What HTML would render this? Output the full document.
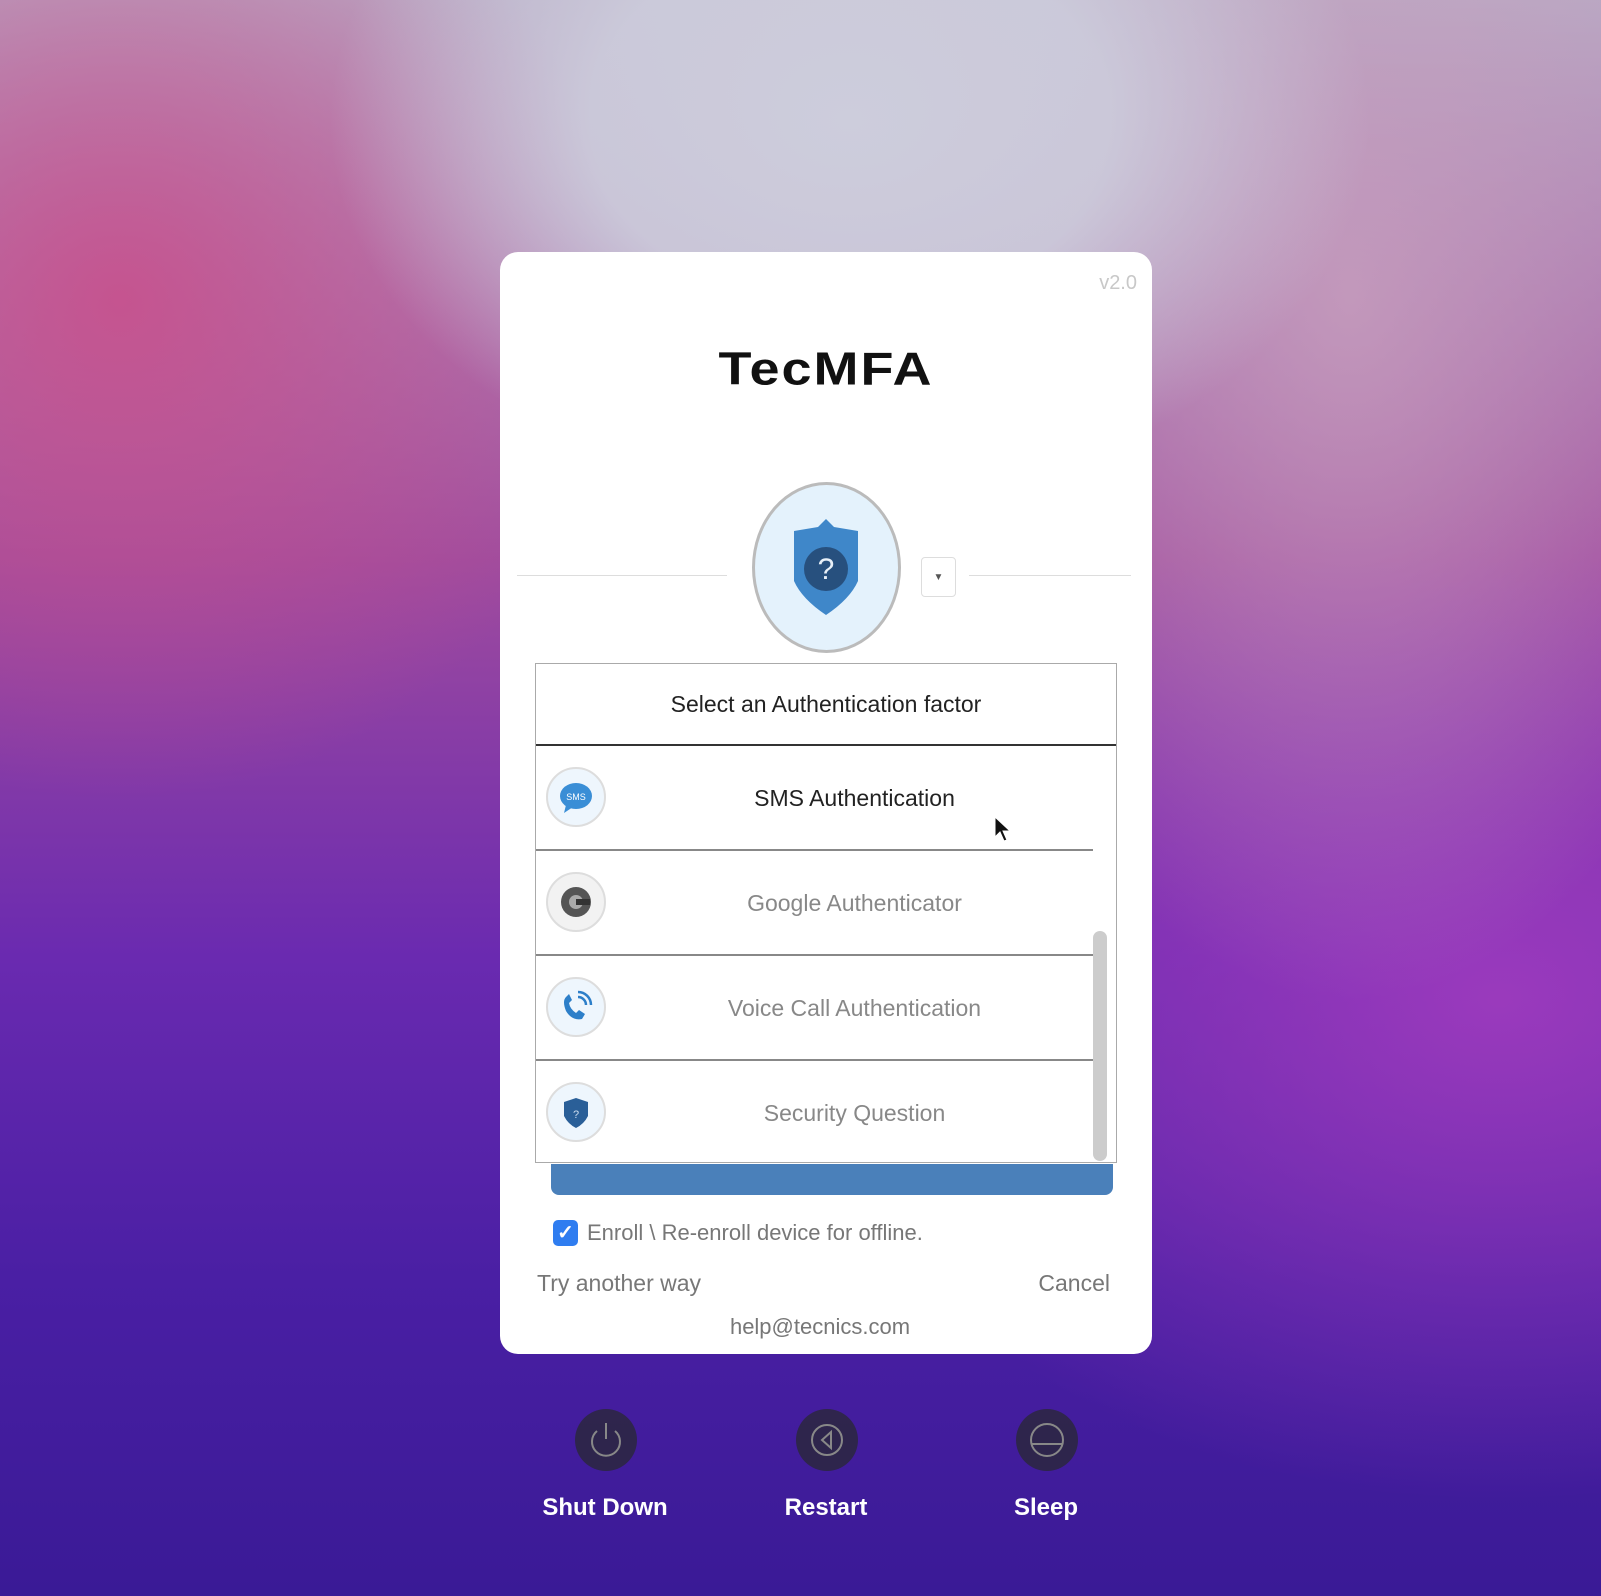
<!DOCTYPE html>
<html><head><meta charset="utf-8"><style>
*{margin:0;padding:0;box-sizing:border-box}
body{width:1601px;height:1596px;overflow:hidden;position:relative;font-family:"Liberation Sans",sans-serif;
background:
radial-gradient(ellipse 520px 380px at 850px 120px,rgba(205,205,220,1) 0%,rgba(205,205,220,0.9) 50%,rgba(205,205,220,0) 100%),
radial-gradient(ellipse 420px 700px at 1350px 300px,rgba(200,160,190,0.8),rgba(200,160,190,0) 100%),
radial-gradient(ellipse 500px 500px at 120px 300px,rgba(200,80,140,0.9),rgba(200,80,140,0) 100%),
radial-gradient(ellipse 700px 500px at 1500px 1000px,rgba(160,60,190,0.9),rgba(160,60,190,0) 100%),
linear-gradient(180deg,#b7a9c4 0%,#a04c9e 35%,#6a2ab0 60%,#4a1fa4 80%,#3a1a96 100%);}
.card{position:absolute;left:500px;top:252px;width:652px;height:1102px;background:#fff;border-radius:18px}
.abs{position:absolute}
.row{position:absolute;left:0;width:557px;height:105px;border-bottom:2px solid #888}
.row .ic{position:absolute;left:10px;top:21px;width:60px;height:60px;border-radius:50%;border:2px solid #ddd;background:#eef6fd}
.row .t{position:absolute;left:80px;right:0;top:0;line-height:105px;text-align:center;font-size:23px;color:#888}
.btn{position:absolute;width:62px;height:62px;border-radius:50%;background:rgba(40,40,50,0.75);top:1409px}
.lbl{position:absolute;top:1494px;color:#fff;font-weight:bold;font-size:24px;text-align:center;width:200px}
</style></head><body>
<div class="card">
 <div class="abs" style="right:15px;top:20px;color:#c8c8c8;font-size:20px">v2.0</div>
 <div class="abs" style="left:0;width:652px;top:86px;text-align:center;font-size:54px;font-weight:bold;color:#111;letter-spacing:2px;transform:scaleY(0.85)">TecMFA</div>
 <div class="abs" style="left:17px;top:323px;width:210px;height:1px;background:#ddd"></div>
 <div class="abs" style="left:469px;top:323px;width:162px;height:1px;background:#ddd"></div>
 <div class="abs" style="left:252px;top:230px;width:149px;height:171px;border-radius:50%;border:3px solid #bbb;background:#e4f2fc"></div>
 <svg class="abs" style="left:290px;top:265px" width="72" height="100" viewBox="0 0 72 100">
  <path d="M36 2 L44 10 L68 14 L68 64 Q60 82 36 98 Q12 82 4 64 L4 14 L28 10 Z" fill="#3f87c9"/>
  <circle cx="36" cy="52" r="22" fill="#27507e"/>
  <text x="36" y="62" text-anchor="middle" font-size="30" fill="#e8f0f8" font-family="Liberation Sans">?</text>
 </svg>
 <div class="abs" style="left:421px;top:305px;width:35px;height:40px;border:1px solid #ddd;border-radius:4px;text-align:center;line-height:40px;font-size:10px;color:#555">▼</div>
 <div class="abs" style="left:35px;top:411px;width:582px;height:500px;border:1px solid #aaa">
  <div class="abs" style="left:0;top:0;width:580px;height:82px;border-bottom:2px solid #333;text-align:center;line-height:80px;font-size:23px;color:#222">Select an Authentication factor</div>
  <div class="abs" style="left:557px;top:267px;width:14px;height:230px;border-radius:7px;background:#ccc"></div>
  <div class="row" style="top:82px"><div class="ic"><svg width="56" height="56"><ellipse cx="28" cy="27" rx="16" ry="13" fill="#3a8ed6"/><path d="M18 36 L16 44 L25 38Z" fill="#3a8ed6"/><text x="28" y="31" text-anchor="middle" font-size="9" fill="#fff" font-family="Liberation Sans">SMS</text></svg></div><div class="t" style="color:#222">SMS Authentication</div></div>
  <div class="row" style="top:187px"><div class="ic" style="background:#f2f2f2"><svg width="56" height="56"><circle cx="28" cy="28" r="15" fill="#555"/><circle cx="28" cy="28" r="7" fill="#aaa"/><rect x="28" y="25" width="14" height="6" fill="#333"/></svg></div><div class="t">Google Authenticator</div></div>
  <div class="row" style="top:292px"><div class="ic"><svg width="56" height="56"><path d="M18 18 Q14 22 18 32 Q24 42 34 40 L37 35 L31 31 L28 34 Q22 30 21 24 L24 21 L21 15Z" fill="#2d7fc9"/><path d="M30 18 A8 8 0 0 1 38 26 M30 13 A13 13 0 0 1 43 26" stroke="#2d7fc9" stroke-width="2.5" fill="none"/></svg></div><div class="t">Voice Call Authentication</div></div>
  <div class="row" style="top:397px;height:103px;border-bottom:none"><div class="ic"><svg width="56" height="56"><path d="M28 14 L40 18 L40 32 Q36 40 28 44 Q20 40 16 32 L16 18Z" fill="#2a5f98"/><text x="28" y="34" text-anchor="middle" font-size="11" fill="#cde" font-family="Liberation Sans">?</text></svg></div><div class="t">Security Question</div></div>
 </div>
 <div class="abs" style="left:51px;top:912px;width:562px;height:31px;background:#4a80ba;border-radius:0 0 8px 8px"></div>
 <div class="abs" style="left:53px;top:968px;width:25px;height:26px;border-radius:5px;background:#2f7df0;color:#fff;text-align:center;line-height:26px;font-size:20px;font-weight:bold">✓</div>
 <div class="abs" style="left:87px;top:968px;font-size:22px;color:#777;line-height:26px">Enroll \ Re-enroll device for offline.</div>
 <div class="abs" style="left:37px;top:1018px;font-size:23px;color:#777">Try another way</div>
 <div class="abs" style="right:42px;top:1018px;font-size:23px;color:#777">Cancel</div>
 <div class="abs" style="left:0;width:640px;top:1062px;text-align:center;font-size:22px;color:#777">help@tecnics.com</div>
</div>
<svg class="abs" style="left:993px;top:815px" width="20" height="30"><path d="M2 2 L2 22 L7 17 L11 26 L14 25 L10 16 L17 16Z" fill="#111" stroke="#fff" stroke-width="1"/></svg>
<div class="btn" style="left:575px"><svg width="62" height="62"><path d="M22 22 A14 14 0 1 0 40 22" stroke="#888" stroke-width="2" fill="none"/><line x1="31" y1="14" x2="31" y2="30" stroke="#888" stroke-width="2"/></svg></div>
<div class="btn" style="left:796px"><svg width="62" height="62"><circle cx="31" cy="31" r="15" stroke="#888" stroke-width="2" fill="none"/><path d="M35 23 L26 31 L35 39Z" stroke="#888" stroke-width="2" fill="none"/></svg></div>
<div class="btn" style="left:1016px"><svg width="62" height="62"><circle cx="31" cy="31" r="16" stroke="#888" stroke-width="2" fill="none"/><line x1="15" y1="35" x2="47" y2="35" stroke="#888" stroke-width="2"/></svg></div>
<div class="lbl" style="left:505px">Shut Down</div>
<div class="lbl" style="left:726px">Restart</div>
<div class="lbl" style="left:946px">Sleep</div>
</body></html>
